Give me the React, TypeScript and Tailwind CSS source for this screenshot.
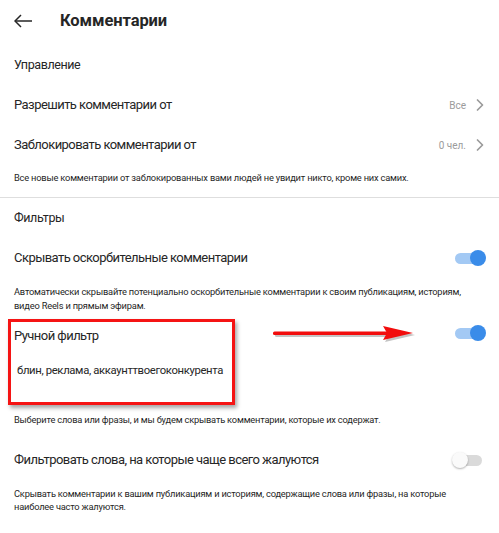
import React from "react";
import { ChevronRight } from "lucide-react";

const Toggle = ({ on }: { on: boolean }) =>
  on ? (
    <div className="relative w-[31px] h-[16px] flex items-center">
      <div className="absolute left-0 right-[2px] h-[11px] rounded-full bg-[#a3c9f4]" />
      <div className="absolute right-0 w-[16px] h-[16px] rounded-full bg-[#3a8ce9]" />
    </div>
  ) : (
    <div className="relative w-[30px] h-[16px] flex items-center">
      <div className="absolute left-[4px] right-0 h-[11px] rounded-full bg-[#dadada]" />
      <div className="absolute left-0 w-[16px] h-[16px] rounded-full bg-[#fafafa] shadow-[0_1px_2px_rgba(0,0,0,0.3)]" />
    </div>
  );

const Row = ({ label, value }: { label: string; value: string }) => (
  <div className="flex items-center justify-between h-full">
    <span className="text-[13px] tracking-[-0.55px]">{label}</span>
    <div className="flex items-center gap-[4px] text-[#9b9b9b] -mr-[5px]">
      <span className="text-[10px]">{value}</span>
      <ChevronRight className="w-[20px] h-[20px]" strokeWidth={2.1} />
    </div>
  </div>
);

const Title = ({ children }: { children: React.ReactNode }) => (
  <span className="text-[13px] tracking-[-0.55px]">{children}</span>
);

const Note = ({ children, className = "" }: { children: React.ReactNode; className?: string }) => (
  <p className={"text-[9.3px] tracking-[-0.2px] text-[#1f1f1f] " + className}>{children}</p>
);

export default function App() {
  return (
    <div className="relative w-[499px] h-[533px] overflow-hidden bg-white text-[#262626] font-[Roboto,'Noto_Sans',sans-serif]">
      {/* header */}
      <div className="h-[42px] flex items-center pl-[14px]">
        <svg width="18" height="14" viewBox="0 0 18 14" fill="none" stroke="#262626" strokeWidth="1.5">
          <path d="M18 7H1.2" />
          <path d="M7 1L1 7l6 6" />
        </svg>
        <h1 className="ml-[28px] text-[16.5px] font-bold tracking-[-0.1px]">Комментарии</h1>
      </div>

      <div className="px-[14px]">
        <div className="h-[46px] flex items-center text-[12.5px] tracking-[-0.4px]">Управление</div>
        <div className="h-[34px]">
          <Row label="Разрешить комментарии от" value="Все" />
        </div>
        <div className="h-[46px]">
          <Row label="Заблокировать комментарии от" value="0 чел." />
        </div>
        <Note className="h-[20px] flex items-center">
          Все новые комментарии от заблокированных вами людей не увидит никто, кроме них самих.
        </Note>
      </div>

      <div className="mt-[9px] border-t border-[#dedede]" />

      <div className="pl-[14px] pr-[13px]">
        <div className="h-[40px] flex items-center text-[12.5px] tracking-[-0.4px]">Фильтры</div>
        <div className="h-[40px] flex items-center justify-between">
          <Title>Скрывать оскорбительные комментарии</Title>
          <Toggle on />
        </div>
        <Note className="pt-[7px] leading-[14px]">
          Автоматически скрывайте потенциально оскорбительные комментарии к своим публикациям, историям,
          видео Reels и прямым эфирам.
        </Note>

        <div className="mt-[6px] flex items-start justify-between">
          <div className="-ml-[6px] w-[227px] h-[86px] border-[3px] border-[#f51414] shadow-[2px_3px_4px_rgba(0,0,0,0.35)] pl-[3px]">
            <div className="pt-[3px] h-[23px] leading-[20px]">
              <Title>Ручной фильтр</Title>
            </div>
            <div className="mt-[16px] pl-[3px] leading-[20px] text-[11.3px] tracking-[-0.35px] whitespace-nowrap">
              блин, реклама, аккаунттвоегоконкурента
            </div>
          </div>
          <div className="mt-[6px]">
            <Toggle on />
          </div>
        </div>

        <Note className="mt-[8px] leading-[14px]">
          Выберите слова или фразы, и мы будем скрывать комментарии, которые их содержат.
        </Note>

        <div className="mt-[13px] h-[40px] flex items-center justify-between">
          <Title>Фильтровать слова, на которые чаще всего жалуются</Title>
          <div className="mr-[4px]">
            <Toggle on={false} />
          </div>
        </div>
        <Note className="pt-[7px] leading-[13px] pr-[30px]">
          Скрывать комментарии к вашим публикациям и историям, содержащие слова или фразы, на которые
          наиболее часто жалуются.
        </Note>
      </div>

      {/* annotation arrow */}
      <svg className="absolute left-[270px] top-[322px]" width="150" height="24" viewBox="0 0 150 24">
        <g transform="translate(2,2)" fill="#8a8a8a" opacity="0.5">
          <rect x="3" y="9.5" width="115" height="3.5" rx="1.5" />
          <polygon points="113,4 143,11 113,18 117,11" />
        </g>
        <rect x="3" y="9.5" width="115" height="3.5" rx="1.5" fill="#f20d0d" />
        <polygon points="113,4 143,11 113,18 117,11" fill="#f20d0d" />
      </svg>
    </div>
  );
}
